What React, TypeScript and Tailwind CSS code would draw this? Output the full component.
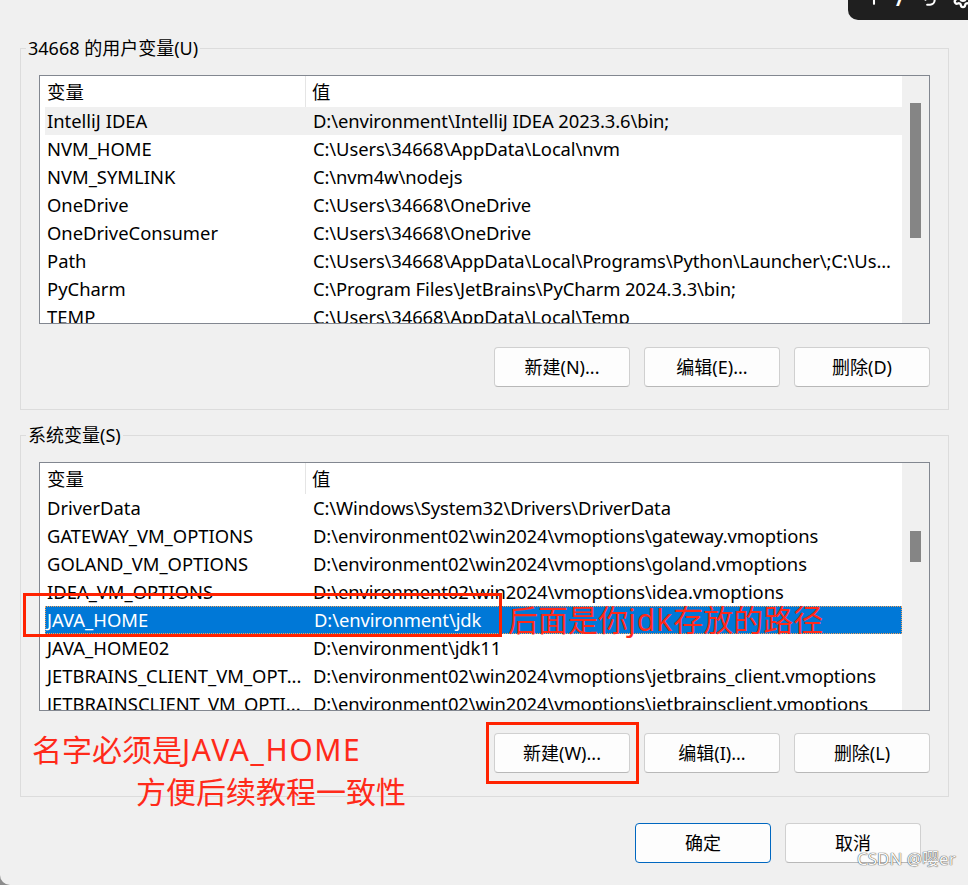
import { Plus, Settings, Undo2 } from 'lucide-react';

type EnvRow = { name: string; value: string };

const userVars: EnvRow[] = [
  { name: 'IntelliJ IDEA', value: 'D:\\environment\\IntelliJ IDEA 2023.3.6\\bin;' },
  { name: 'NVM_HOME', value: 'C:\\Users\\34668\\AppData\\Local\\nvm' },
  { name: 'NVM_SYMLINK', value: 'C:\\nvm4w\\nodejs' },
  { name: 'OneDrive', value: 'C:\\Users\\34668\\OneDrive' },
  { name: 'OneDriveConsumer', value: 'C:\\Users\\34668\\OneDrive' },
  { name: 'Path', value: 'C:\\Users\\34668\\AppData\\Local\\Programs\\Python\\Launcher\\;C:\\Us...' },
  { name: 'PyCharm', value: 'C:\\Program Files\\JetBrains\\PyCharm 2024.3.3\\bin;' },
  { name: 'TEMP', value: 'C:\\Users\\34668\\AppData\\Local\\Temp' },
];

const systemVars: EnvRow[] = [
  { name: 'DriverData', value: 'C:\\Windows\\System32\\Drivers\\DriverData' },
  { name: 'GATEWAY_VM_OPTIONS', value: 'D:\\environment02\\win2024\\vmoptions\\gateway.vmoptions' },
  { name: 'GOLAND_VM_OPTIONS', value: 'D:\\environment02\\win2024\\vmoptions\\goland.vmoptions' },
  { name: 'IDEA_VM_OPTIONS', value: 'D:\\environment02\\win2024\\vmoptions\\idea.vmoptions' },
  { name: 'JAVA_HOME', value: 'D:\\environment\\jdk' },
  { name: 'JAVA_HOME02', value: 'D:\\environment\\jdk11' },
  { name: 'JETBRAINS_CLIENT_VM_OPT...', value: 'D:\\environment02\\win2024\\vmoptions\\jetbrains_client.vmoptions' },
  { name: 'JETBRAINSCLIENT_VM_OPTI...', value: 'D:\\environment02\\win2024\\vmoptions\\jetbrainsclient.vmoptions' },
];

function WinButton({ label, primary }: { label: string; primary?: boolean }) {
  return (
    <button
      className={`w-[136px] h-[40px] rounded-[4px] bg-[#fdfdfd] text-[18px] text-black border ${
        primary ? 'border-[#0067c0]' : 'border-[#d0d0d0] border-b-[#b8b8b8]'
      }`}
    >
      {label}
    </button>
  );
}

function VarList({
  rows,
  hoverIndex,
  selectedIndex,
  thumbTop,
  thumbHeight,
}: {
  rows: EnvRow[];
  hoverIndex?: number;
  selectedIndex?: number;
  thumbTop: number;
  thumbHeight: number;
}) {
  return (
    <div className="flex h-[249px] border border-[#828790] bg-white overflow-hidden text-[18.4px]">
      <div className="flex-1 pl-[5px] overflow-hidden">
        <div className="flex h-[31px] items-center">
          <div className="w-[261px] h-full flex items-center pl-[2px] border-r border-[#e5e5e5]">变量</div>
          <div className="pl-[6px]">值</div>
        </div>
        {rows.map((row, i) => {
          const selected = i === selectedIndex;
          const hovered = i === hoverIndex;
          return (
            <div
              key={row.name}
              className={`flex h-[28px] items-center whitespace-nowrap ${
                selected
                  ? 'bg-[#0078d7] text-white border border-dotted border-[#f3a35c]'
                  : hovered
                    ? 'bg-[#f0f0f0]'
                    : ''
              }`}
            >
              <div className={`w-[268px] ${selected ? 'pl-[1px]' : 'pl-[2px]'}`}>{row.name}</div>
              <div className="tracking-[-0.1px]">{row.value}</div>
            </div>
          );
        })}
      </div>
      {/* scrollbar */}
      <div className="w-[27px] bg-[#f0f0f0] flex flex-col" style={{ paddingTop: thumbTop }}>
        <div className="ml-[8px] w-[11px] bg-[#858585]" style={{ height: thumbHeight }} />
      </div>
    </div>
  );
}

export default function App() {
  return (
    <div className="w-[968px] h-[885px] bg-[#8c8c8c]">
      <div
        className="relative w-[968px] h-[885px] bg-[#f0f0f0] rounded-bl-[10px] overflow-hidden pt-[36px] text-[18px] text-black leading-[24px]"
        style={{ fontFamily: '"Noto Sans", "Noto Sans CJK SC", sans-serif' }}
      >
        {/* capture toolbar, mostly off-screen */}
        <div className="absolute top-0 right-0 w-[120px] h-[20px] bg-[#1f1f1f] rounded-bl-[10px] overflow-hidden flex items-start gap-[8px] pl-[16px]">
          <Plus className="w-[20px] h-[20px] text-white -mt-[12px] shrink-0" strokeWidth={2.5} />
          <span className="text-white text-[20px] leading-[20px] -mt-[11px] ml-[4px] font-bold">/</span>
          <Undo2 className="w-[20px] h-[20px] text-white -mt-[12px] ml-[6px] shrink-0" strokeWidth={2.5} />
          <Settings className="w-[22px] h-[22px] text-white -mt-[13px] ml-[6px] shrink-0" strokeWidth={2.5} />
        </div>

        <fieldset className="ml-[20px] w-[929px] border border-[#dcdcdc] p-0">
          <legend className="ml-[5px] px-[2px] leading-[24px]">34668 的用户变量(U)</legend>
          <div className="px-[18px] pt-[15px] pb-[22px]">
            <VarList rows={userVars} hoverIndex={0} thumbTop={27} thumbHeight={135} />
            <div className="flex justify-end gap-[14px] mt-[23px]">
              <WinButton label="新建(N)..." />
              <WinButton label="编辑(E)..." />
              <WinButton label="删除(D)" />
            </div>
          </div>
        </fieldset>

        <fieldset className="ml-[20px] mt-[13px] w-[929px] border border-[#dcdcdc] p-0">
          <legend className="ml-[5px] px-[2px] leading-[24px]">系统变量(S)</legend>
          <div className="px-[18px] pt-[15px] pb-[23px]">
            <VarList rows={systemVars} selectedIndex={4} thumbTop={68} thumbHeight={31} />
            <div className="flex justify-end gap-[14px] mt-[22px]">
              <WinButton label="新建(W)..." />
              <WinButton label="编辑(I)..." />
              <WinButton label="删除(L)" />
            </div>
          </div>
        </fieldset>

        <div className="flex justify-end gap-[14px] mt-[26px] pr-[47px]">
          <WinButton label="确定" primary />
          <WinButton label="取消" />
        </div>

        {/* red annotations drawn over the screenshot */}
        <div className="absolute left-[23px] top-[593px] w-[479px] h-[44px] border-[3px] border-[#ff2200]" />
        <div className="absolute left-[486px] top-[722px] w-[153px] h-[62px] border-[3px] border-[#ff2200]" />
        <div className="absolute left-[508px] top-[603px] text-[30px] leading-[34px] text-[#ff2a1a] whitespace-nowrap">
          后面是你<span className="tracking-[1px]">jdk</span>存放的路径
        </div>
        <div className="absolute left-[32px] top-[732px] text-[30px] leading-[36px] text-[#ff2a1a] whitespace-nowrap">
          名字必须是<span className="tracking-[1.6px]">JAVA_HOME</span>
        </div>
        <div className="absolute left-[136px] top-[774px] text-[30px] leading-[36px] text-[#ff2a1a] whitespace-nowrap">
          方便后续教程一致性
        </div>

        {/* watermark */}
        <div className="absolute left-[857px] top-[848px] text-[17px] leading-[22px] text-[#f8f8f8] whitespace-nowrap [text-shadow:0_0_1px_#444,0_0_1px_#444]">
          CSDN @嘤er
        </div>
      </div>
    </div>
  );
}
